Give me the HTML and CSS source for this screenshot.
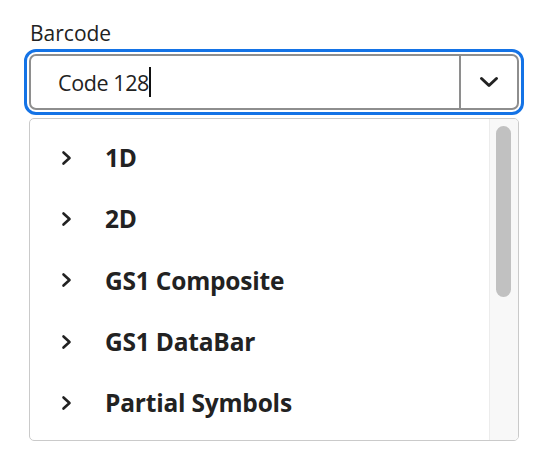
FILE: index.html
```html
<!DOCTYPE html>
<html lang="en">
<head>
    <meta charset="UTF-8">
    <meta name="viewport" content="width=device-width, initial-scale=1.0">
    <title>Barcode Picker</title>
    <link rel="stylesheet" href="styles.css">
</head>
<body>
    <div class="field">
        <label class="field-label" for="barcodeType">Barcode</label>

        <div class="combobox">
            <div class="combobox-input" id="barcodeType">
                <span>Code 128</span><span class="caret"></span>
            </div>
            <div class="combobox-button">
                <svg width="20" height="12" viewBox="0 0 20 12">
                    <path d="M2.5 2.5 L10 9.5 L17.5 2.5" fill="none" stroke="#222" stroke-width="3" stroke-linecap="round" stroke-linejoin="round"/>
                </svg>
            </div>
        </div>

        <!-- Popup with the barcode groups -->
        <div class="popup">
            <ul class="tree">
                <li class="tree-item">
                    <svg class="expander" width="12" height="16" viewBox="0 0 12 16">
                        <path d="M2.5 2.5 L8.5 8 L2.5 13.5" fill="none" stroke="#222" stroke-width="2.6" stroke-linecap="round" stroke-linejoin="round"/>
                    </svg>
                    <span>1D</span>
                </li>
                <li class="tree-item">
                    <svg class="expander" width="12" height="16" viewBox="0 0 12 16">
                        <path d="M2.5 2.5 L8.5 8 L2.5 13.5" fill="none" stroke="#222" stroke-width="2.6" stroke-linecap="round" stroke-linejoin="round"/>
                    </svg>
                    <span>2D</span>
                </li>
                <li class="tree-item">
                    <svg class="expander" width="12" height="16" viewBox="0 0 12 16">
                        <path d="M2.5 2.5 L8.5 8 L2.5 13.5" fill="none" stroke="#222" stroke-width="2.6" stroke-linecap="round" stroke-linejoin="round"/>
                    </svg>
                    <span>GS1 Composite</span>
                </li>
                <li class="tree-item">
                    <svg class="expander" width="12" height="16" viewBox="0 0 12 16">
                        <path d="M2.5 2.5 L8.5 8 L2.5 13.5" fill="none" stroke="#222" stroke-width="2.6" stroke-linecap="round" stroke-linejoin="round"/>
                    </svg>
                    <span>GS1 DataBar</span>
                </li>
                <li class="tree-item">
                    <svg class="expander" width="12" height="16" viewBox="0 0 12 16">
                        <path d="M2.5 2.5 L8.5 8 L2.5 13.5" fill="none" stroke="#222" stroke-width="2.6" stroke-linecap="round" stroke-linejoin="round"/>
                    </svg>
                    <span>Partial Symbols</span>
                </li>
            </ul>
            <div class="scrollbar">
                <div class="scrollbar-thumb"></div>
            </div>
        </div>
    </div>
</body>
</html>
```

FILE: styles.css
```css
body {
    margin: 0;
    font-family: "Open Sans", "Noto Sans", sans-serif;
    color: #222;
    background: #fff;
}
.field {
    padding: 19px 0 0 29px;
    width: 490px;
}
.field-label {
    display: block;
    font-size: 21px;
    line-height: 28px;
    padding-left: 1px;
    margin-bottom: 7px;
}
.combobox {
    display: flex;
    height: 56px;
    box-sizing: border-box;
    border: 2px solid #8e8e8e;
    border-radius: 7px;
    outline: 3px solid #1473e6;
    outline-offset: 2px;
}
.combobox-input {
    flex: 1;
    display: flex;
    align-items: center;
    padding-left: 27px;
    font-size: 21.5px;
    letter-spacing: -0.4px;
}
.caret {
    display: inline-block;
    width: 2px;
    height: 30px;
    background: #111;
}
.combobox-button {
    width: 56px;
    display: flex;
    align-items: center;
    justify-content: center;
    border-left: 2px solid #8e8e8e;
}
.popup {
    display: flex;
    margin-top: 8px;
    height: 323px;
    box-sizing: border-box;
    border: 1px solid #cacaca;
    border-radius: 5px;
    overflow: hidden;
}
.tree {
    flex: 1;
    list-style: none;
    margin: 0;
    padding: 8px 0 0 0;
}
.tree-item {
    display: flex;
    align-items: center;
    height: 61.3px;
    padding-left: 31px;
    font-size: 24.5px;
    font-weight: 700;
    letter-spacing: -0.2px;
}
.expander {
    margin-right: 32px;
}
.scrollbar {
    width: 28px;
    background: #f8f8f8;
    border-left: 1px solid #ececec;
    padding-top: 7px;
}
.scrollbar-thumb {
    width: 15px;
    height: 171px;
    margin-left: 6px;
    border-radius: 8px;
    background: #c1c1c1;
}
```
